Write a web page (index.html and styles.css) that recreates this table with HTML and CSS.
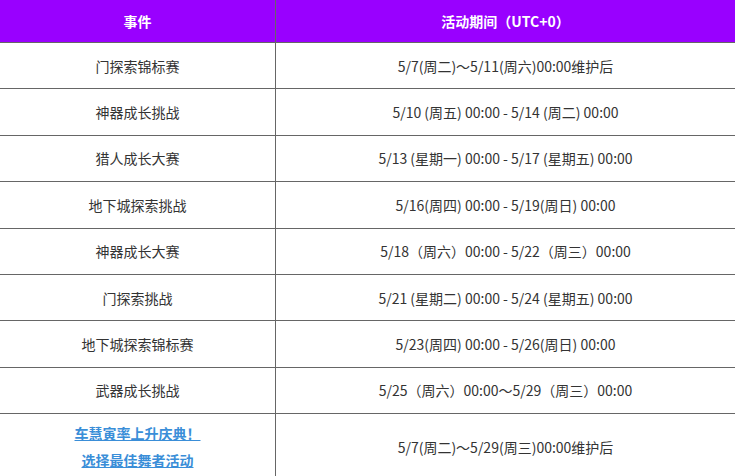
FILE: index.html
```html
<!DOCTYPE html>
<html lang="zh-CN">
<head>
<meta charset="utf-8">
<title>活动日程</title>
<link rel="stylesheet" href="styles.css">
</head>
<body>
<table class="schedule">
  <colgroup>
    <col class="col-event">
    <col class="col-period">
  </colgroup>
  <thead>
    <tr>
      <th>事件</th>
      <th>活动期间（UTC+0）</th>
    </tr>
  </thead>
  <tbody>
    <tr><td>门探索锦标赛</td><td>5/7(周二)～5/11(周六)00:00维护后</td></tr>
    <tr><td>神器成长挑战</td><td>5/10 (周五) 00:00 - 5/14 (周二) 00:00</td></tr>
    <tr><td>猎人成长大赛</td><td>5/13 (星期一) 00:00 - 5/17 (星期五) 00:00</td></tr>
    <tr><td>地下城探索挑战</td><td>5/16(周四) 00:00 - 5/19(周日) 00:00</td></tr>
    <tr><td>神器成长大赛</td><td>5/18（周六）00:00 - 5/22（周三）00:00</td></tr>
    <tr><td>门探索挑战</td><td>5/21 (星期二) 00:00 - 5/24 (星期五) 00:00</td></tr>
    <tr><td>地下城探索锦标赛</td><td>5/23(周四) 00:00 - 5/26(周日) 00:00</td></tr>
    <tr><td>武器成长挑战</td><td>5/25（周六）00:00～5/29（周三）00:00</td></tr>
    <tr class="last">
      <td class="links">
        <a href="#" class="link">车慧寅率上升庆典！ </a><br>
        <a href="#" class="link">选择最佳舞者活动</a>
      </td>
      <td>5/7(周二)～5/29(周三)00:00维护后</td>
    </tr>
  </tbody>
</table>
</body>
</html>
```

FILE: styles.css
```css
html, body {
  margin: 0;
  padding: 0;
  background: #ffffff;
  overflow: hidden;
}

.schedule {
  border-collapse: collapse;
  width: 737px;
  margin: -1px 0 0 -1px;
  font-family: "Noto Sans CJK SC", "Noto Sans", sans-serif;
  font-size: 14px;
  color: #333333;
  table-layout: fixed;
}

.col-event {
  width: 276px;
}

.schedule th,
.schedule td {
  border: 1px solid #666666;
  text-align: center;
  vertical-align: middle;
  padding: 0;
}

.schedule th {
  background: #9900ff;
  color: #ffffff;
  font-weight: bold;
  height: 42px;
}

.schedule td {
  height: 45.375px;
}

.schedule .last td {
  height: 65px;
}

.links {
  line-height: 27px;
}

.link {
  color: #3a8ed8;
  font-weight: bold;
  text-decoration: underline;
}
```
